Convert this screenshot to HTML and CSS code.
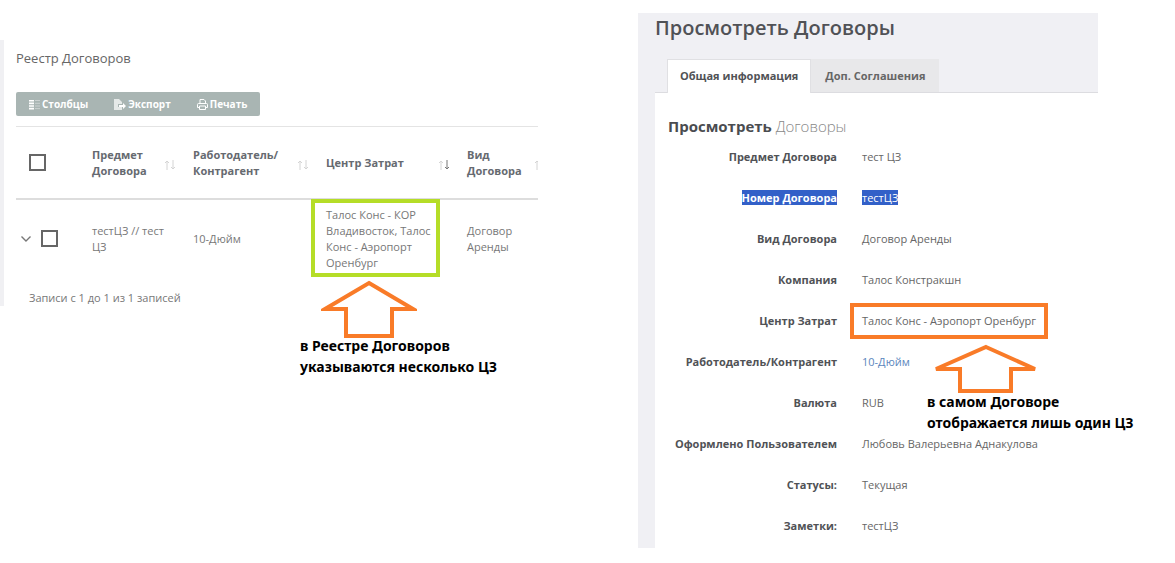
FILE: index.html
```html
<!DOCTYPE html>
<html lang="ru">
<head>
    <meta charset="UTF-8">
    <meta name="viewport" content="width=device-width, initial-scale=1.0">
    <title>Договоры</title>
    <link rel="stylesheet" href="styles.css">
</head>
<body>
    <svg class="defs" aria-hidden="true">
        <symbol id="sort" viewBox="0 0 12 12">
            <path d="M3 11V2M1 4l2-2 2 2"/>
        </symbol>
        <symbol id="sort-down" viewBox="0 0 12 12">
            <path d="M9 1v9M7 8l2 2 2-2"/>
        </symbol>
    </svg>

    <main class="page">
        <!-- Contracts list -->
        <section class="registry">
            <h2>Реестр Договоров</h2>
            <div class="toolbar">
                <button type="button">
                    <svg width="11" height="11" viewBox="0 0 11 11"><path d="M0 1h5v1.6H0zM0 3.6h5v1.6H0zM0 6.2h5v1.6H0zM0 8.8h5v1.6H0z" fill="#fff"/><path d="M6 1.5h5M6 4.3h5M6 7h5M6 9.6h5" stroke="#fff" stroke-width=".8" opacity=".5"/></svg>
                    Столбцы
                </button>
                <button type="button">
                    <svg width="12" height="11" viewBox="0 0 12 11"><path d="M0 0h5l3 3v2H4v3h4v3H0z" fill="#fff" opacity=".7"/><path d="M5 6h4V4l3 3-3 3V8H5z" fill="#fff"/></svg>
                    Экспорт
                </button>
                <button type="button">
                    <svg width="11" height="11" viewBox="0 0 11 11" fill="none" stroke="#fff"><path d="M3 4.5V.5h4l1.5 1.5v2.5M2.5 8.5h-2v-3q0-1 1-1h8q1 0 1 1v3h-2M2.5 7h6v3.5h-6z"/></svg>
                    Печать
                </button>
            </div>

            <div class="table-area">
                <div class="table-wrap">
                    <table>
                        <colgroup>
                            <col class="col-check">
                            <col class="col-subject">
                            <col class="col-partner">
                            <col class="col-center">
                            <col>
                        </colgroup>
                        <thead>
                            <tr>
                                <th><div class="check"><input type="checkbox" aria-label="Выбрать все"></div></th>
                                <th><div class="head">Предмет Договора <svg class="sort"><use href="#sort"/><use href="#sort-down"/></svg></div></th>
                                <th><div class="head">Работодатель/ Контрагент <svg class="sort"><use href="#sort"/><use href="#sort-down"/></svg></div></th>
                                <th><div class="head">Центр Затрат <svg class="sort"><use href="#sort"/><use class="on" href="#sort-down"/></svg></div></th>
                                <th><div class="head">Вид Договора <svg class="sort"><use href="#sort"/><use href="#sort-down"/></svg></div></th>
                            </tr>
                        </thead>
                        <tbody>
                            <tr>
                                <td>
                                    <div class="check row-check">
                                        <svg width="10" height="6" viewBox="0 0 10 6"><path d="M.5.5L5 5 9.5.5" fill="none" stroke="#777" stroke-width="1.4"/></svg>
                                        <input type="checkbox" aria-label="Выбрать запись">
                                    </div>
                                </td>
                                <td>тестЦЗ // тест ЦЗ</td>
                                <td>10-Дюйм</td>
                                <td class="marked">Талос Конс - КОР Владивосток, Талос Конс - Аэропорт Оренбург</td>
                                <td>Договор Аренды</td>
                            </tr>
                        </tbody>
                    </table>
                </div>
                <div class="note note-list">
                    <svg width="96" height="58" viewBox="0 0 96 58"><path d="M48 3L92 29H71V56H25V29H4z"/></svg>
                    <p>в Реестре Договоров<br>указываются несколько ЦЗ</p>
                </div>
            </div>
            <p class="total">Записи с 1 до 1 из 1 записей</p>
        </section>

        <!-- Contract card -->
        <section class="contract">
            <h1>Просмотреть Договоры</h1>
            <nav class="tabs">
                <a class="active" href="#info">Общая информация</a>
                <a href="#extra">Доп. Соглашения</a>
            </nav>
            <div class="card" id="info">
                <h3>Просмотреть <span>Договоры</span></h3>
                <dl>
                    <dt>Предмет Договора</dt>
                    <dd>тест ЦЗ</dd>
                    <dt><span class="selected">Номер Договора</span></dt>
                    <dd><span class="selected">тестЦЗ</span></dd>
                    <dt>Вид Договора</dt>
                    <dd>Договор Аренды</dd>
                    <dt>Компания</dt>
                    <dd>Талос Констракшн</dd>
                    <dt>Центр Затрат</dt>
                    <dd>
                        <div class="frame">
                            Талос Конс - Аэропорт Оренбург
                            <div class="note note-card">
                                <svg width="108" height="50" viewBox="0 0 108 50"><path d="M54 3L103 25H79V47H28V25H4z"/></svg>
                                <p>в самом Договоре<br>отображается лишь один ЦЗ</p>
                            </div>
                        </div>
                    </dd>
                    <dt>Работодатель/Контрагент</dt>
                    <dd><a href="#partner">10-Дюйм</a></dd>
                    <dt>Валюта</dt>
                    <dd>RUB</dd>
                    <dt>Оформлено Пользователем</dt>
                    <dd>Любовь Валерьевна Аднакулова</dd>
                    <dt>Статусы:</dt>
                    <dd>Текущая</dd>
                    <dt>Заметки:</dt>
                    <dd>тестЦЗ</dd>
                </dl>
            </div>
        </section>
    </main>
</body>
</html>
```

FILE: styles.css
```css
* {
    box-sizing: border-box;
}
body {
    margin: 0;
    background: #fff;
    color: #777;
    font-family: "Open Sans", sans-serif;
    font-size: 11px;
    line-height: 16px;
}
h1, h2, h3, p, dl, dd {
    margin: 0;
}
.defs {
    display: none;
}
.page {
    display: grid;
    grid-template-columns: 538fr 460fr;
    column-gap: 100px;
    align-items: start;
    padding: 13px 77px 15px 0;
}

/* list */
.registry {
    min-width: 0;
    margin-top: 27px;
    padding: 6px 0 0 12px;
    border-left: 4px solid #f0f0f3;
}
.registry h2 {
    color: #666;
    font-size: 13px;
    font-weight: 400;
    line-height: 24px;
}
.toolbar {
    display: flex;
    width: max-content;
    margin: 22px 0 10px;
    background: #a9b5b3;
    border-radius: 2px;
}
.toolbar button {
    display: flex;
    align-items: center;
    gap: 2px;
    height: 24px;
    padding: 0 13px;
    border: none;
    background: none;
    color: #fff;
    font: 700 10px "Open Sans", sans-serif;
    cursor: pointer;
}
.table-area {
    position: relative;
}
.table-wrap {
    overflow: hidden;
    border-top: 1px solid #e4e4e4;
}
table {
    width: calc(100% + 17px);
    table-layout: fixed;
    border-collapse: collapse;
}
.col-check {
    width: 68px;
}
.col-subject {
    width: 101px;
}
.col-partner {
    width: 133px;
}
.col-center {
    width: 141px;
}
th, td {
    padding: 0 8px;
    text-align: left;
}
th {
    height: 72px;
    border-bottom: 2px solid #ddd;
    color: #666a70;
    font-weight: 700;
}
td {
    height: 78px;
}
.head {
    display: flex;
    align-items: center;
    justify-content: space-between;
}
.sort {
    flex: none;
    width: 12px;
    height: 12px;
    margin: 4px 1px 0 0;
    fill: none;
    stroke: #d4d4d4;
}
.sort .on {
    stroke: #777;
}
.check {
    display: flex;
    align-items: center;
    gap: 10px;
    padding-left: 5px;
}
.row-check {
    margin-left: -3px;
    padding-left: 0;
}
input[type="checkbox"] {
    appearance: none;
    width: 17px;
    height: 17px;
    margin: 0;
    border: 2px solid #666;
    background: #fff;
}
.marked {
    position: relative;
}
.marked::before {
    content: "";
    position: absolute;
    inset: -1px 19px 0 -7px;
    border: 4px solid #b5dd27;
}
.total {
    padding: 13px 0 0 13px;
}

/* notes over the page */
.note {
    position: absolute;
    color: #000;
    font-family: "Noto Sans", sans-serif;
    font-size: 14px;
    font-weight: 700;
    line-height: 21px;
    white-space: nowrap;
}
.note svg {
    display: block;
    fill: #fff;
    stroke: #f97b28;
    stroke-width: 4;
}
.note p {
    margin-top: -3px;
}
.note-list {
    top: 154px;
    left: 284px;
}
.note-list svg {
    margin-left: 21px;
}
.note-card {
    top: 37px;
    left: 73px;
}
.note-card svg {
    margin-left: 5px;
}

/* card */
.contract {
    min-width: 0;
    padding-left: 17px;
    background: #f0f0f4;
    color: #666;
}
.contract h1 {
    color: #505256;
    font-size: 20px;
    font-weight: 600;
    line-height: 30px;
}
.tabs {
    display: flex;
    margin-top: 16px;
    padding-left: 12px;
}
.tabs a {
    height: 33px;
    padding: 0 14px;
    background: #e8e8ea;
    color: #666;
    font-weight: 700;
    line-height: 33px;
    text-decoration: none;
}
.tabs .active {
    position: relative;
    margin-bottom: -1px;
    height: 34px;
    padding: 0 12px;
    border: 1px solid #e0e0e3;
    border-bottom: none;
    background: #fff;
    color: #505256;
    line-height: 32px;
}
.card {
    padding: 22px 0 2px 13px;
    border-top: 1px solid #dcdce0;
    background: #fff;
}
.card h3 {
    color: #4a4c50;
    font-size: 15px;
    font-weight: 700;
    line-height: 22px;
}
.card h3 span {
    color: #888;
    font-weight: 300;
}
dl {
    display: grid;
    grid-template-columns: 169px 1fr;
    column-gap: 25px;
    grid-auto-rows: 41px;
    align-items: center;
    margin-top: -1px;
}
dt {
    color: #505256;
    font-weight: 700;
    text-align: right;
    white-space: nowrap;
}
dd a {
    color: #5b86bd;
    text-decoration: none;
}
.selected {
    background: #3260c8;
    color: #fff;
}
.frame {
    position: relative;
    width: max-content;
    margin-left: -12px;
    padding: 6px 8px;
    border: 4px solid #f97b28;
}
```
